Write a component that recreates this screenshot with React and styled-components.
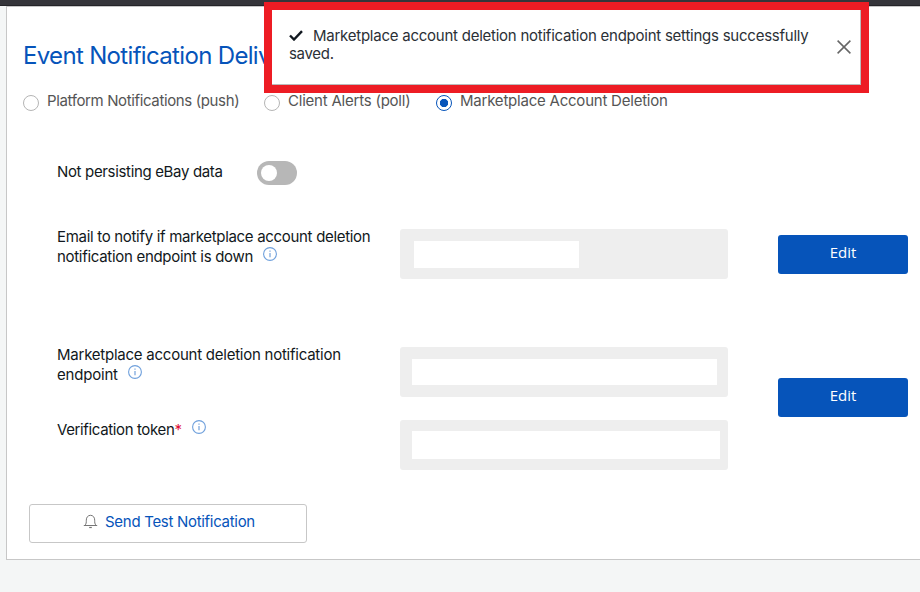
import React from "react";
import styled, { createGlobalStyle } from "styled-components";

const InfoIcon = () => (
  <InfoSvg viewBox="0 0 14 14">
    <circle cx="7" cy="7" r="6.4" fill="none" stroke="#6fa0dc" strokeWidth="1.1" />
    <path d="M7 6v4.3M7 3.6v1.2" stroke="#7fa9de" strokeWidth="1.3" />
  </InfoSvg>
);

const BellIcon = () => (
  <svg width="15" height="15" viewBox="0 0 15 15" fill="none" stroke="#767676">
    <path d="M.8 11.5h13.4M2 11.3C3.3 9.8 3.3 8.5 3.3 6.2 3.3 3.3 5 1.3 7.5 1.3s4.2 2 4.2 4.9c0 2.3 0 3.6 1.3 5.1" />
    <path d="M6.2 13.5h2.6" strokeWidth="1.2" />
  </svg>
);

const App = () => {
  return (
    <>
      <GlobalStyle />
      <Page>
        <TopBar />
        <Panel>
          <Title>Event Notification Delivery</Title>
          <RadioGroup>
            <Radio>
              <Dot />
              <RadioText $track={-0.37}>Platform Notifications (push)</RadioText>
            </Radio>
            <Radio>
              <Dot />
              <RadioText $track={-0.22}>Client Alerts (poll)</RadioText>
            </Radio>
            <Radio>
              <Dot $checked />
              <RadioText $track={-0.22}>Marketplace Account Deletion</RadioText>
            </Radio>
          </RadioGroup>

          <ToggleRow>
            <Text $track={-0.34}>Not persisting eBay data</Text>
            <Toggle>
              <Knob />
            </Toggle>
          </ToggleRow>

          <EmailRow>
            <Label>
              <Text $track={-0.31}>Email to notify if marketplace account deletion</Text>
              <br />
              <Text $track={-0.3}>notification endpoint is down</Text>
              <InfoIcon />
            </Label>
            <Field $pad="12px 14px">
              <Value $width={165} $height={27} />
            </Field>
            <EditButton>Edit</EditButton>
          </EmailRow>

          <EndpointRow>
            <Stack>
              <FieldRow>
                <Label>
                  <Text $track={-0.24}>Marketplace account deletion notification</Text>
                  <br />
                  <Text $track={-0.2}>endpoint</Text>
                  <InfoIcon />
                </Label>
                <Field $pad="12px">
                  <Value $width={305} $height={26} />
                </Field>
              </FieldRow>
              <FieldRow>
                <Label $drop={2}>
                  <Text $track={-0.37}>
                    Verification token<Required>*</Required>
                  </Text>
                  <InfoIcon />
                </Label>
                <Field $pad="11px 12px">
                  <Value $width={308} $height={28} />
                </Field>
              </FieldRow>
            </Stack>
            <EditButton>Edit</EditButton>
          </EndpointRow>

          <TestButton>
            <BellIcon />
            <Text $track={-0.3}>Send Test Notification</Text>
          </TestButton>
        </Panel>

        <Toast>
          <ToastBody>
            <Message>
              <Check viewBox="0 0 14 11">
                <path d="M1 5.5l4 4L13 1.2" fill="none" stroke="#111820" strokeWidth="2.4" />
              </Check>
              <Text $track={-0.245}>
                Marketplace account deletion notification endpoint settings successfully
              </Text>
              <br />
              <Text $track={-0.3}>saved.</Text>
            </Message>
            <Close viewBox="0 0 14 14">
              <path d="M.6.6l12.8 12.8M13.4.6L.6 13.4" stroke="#666" strokeWidth="1.5" />
            </Close>
          </ToastBody>
        </Toast>
      </Page>
    </>
  );
};

const GlobalStyle = createGlobalStyle`
  * {
    box-sizing: border-box;
  }
  body {
    margin: 0;
    background: #f4f6f6;
    font-family: Inter, "Liberation Sans", sans-serif;
    font-size: 15px;
    color: #111820;
    overflow: hidden;
  }
`;

const Page = styled.div`
  position: relative;
  width: 920px;
  height: 592px;
  overflow: hidden;
`;

const TopBar = styled.div`
  height: 6px;
  background: #35353a;
  border-bottom: 1px solid #242428;
`;

const Panel = styled.main`
  height: 554px;
  margin-left: 6px;
  padding: 34px 0 0 16px;
  background: #fff;
  border: 1px solid #c7c7c7;
  border-right: 0;
`;

const Title = styled.h1`
  margin: 0;
  width: 245px;
  height: 30px;
  line-height: 30px;
  overflow: hidden;
  font-size: 24px;
  font-weight: 400;
  letter-spacing: -0.67px;
  color: #0654ba;
  white-space: nowrap;
`;

const Text = styled.span`
  letter-spacing: ${({ $track }) => $track}px;
  white-space: nowrap;
`;

const RadioGroup = styled.div`
  display: flex;
  height: 20px;
  margin-top: 20px;
`;

const Radio = styled.label`
  display: flex;
  gap: 8px;
  flex-shrink: 0;

  &:nth-child(1) {
    width: 241px;
  }
  &:nth-child(2) {
    width: 172px;
  }
`;

const RadioText = styled(Text)`
  line-height: 20px;
  color: #555;
`;

const Dot = styled.span`
  width: 16px;
  height: 16px;
  margin-top: 4px;
  border: 1px solid ${({ $checked }) => ($checked ? "#0654ba" : "#b5b5b5")};
  border-radius: 50%;
  background: ${({ $checked }) =>
    $checked ? "radial-gradient(circle, #0654ba 3.8px, #fff 4.5px)" : "#fff"};
`;

const ToggleRow = styled.div`
  display: grid;
  grid-template-columns: 200px 40px;
  height: 24px;
  margin: 50px 0 0 34px;
  line-height: 22px;
`;

const Toggle = styled.div`
  width: 40px;
  height: 24px;
  padding: 4px;
  border-radius: 12px;
  background: #b7b7b7;
`;

const Knob = styled.div`
  width: 16px;
  height: 16px;
  border-radius: 50%;
  background: #fff;
`;

const FieldRow = styled.div`
  display: grid;
  grid-template-columns: 343px 328px;
  height: 50px;
`;

const EmailRow = styled(FieldRow)`
  grid-template-columns: 343px 328px 180px;
  margin: 44px 0 0 34px;

  button {
    margin: 6px 0 0 50px;
  }
`;

const EndpointRow = styled.div`
  display: flex;
  align-items: center;
  gap: 50px;
  margin: 68px 0 0 34px;

  button {
    margin-top: -22px;
  }
`;

const Stack = styled.div`
  display: grid;
  gap: 23px;
`;

const Label = styled.div`
  margin-top: ${({ $drop = 0 }) => $drop - 2}px;
  line-height: 20px;
`;

const InfoSvg = styled.svg`
  width: 14px;
  height: 14px;
  margin-left: 10px;
  vertical-align: 1px;
`;

const Required = styled.span`
  color: #e0103a;
`;

const Field = styled.div`
  height: 50px;
  padding: ${({ $pad }) => $pad};
  border-radius: 3px;
  background: #eee;
`;

const Value = styled.div`
  width: ${({ $width }) => $width}px;
  height: ${({ $height }) => $height}px;
  background: #fff;
`;

const EditButton = styled.button`
  width: 130px;
  height: 39px;
  padding: 0 0 5px;
  border: 0;
  border-radius: 3px;
  background: #0654ba;
  color: #fff;
  font: 15px "Open Sans", sans-serif;
`;

const TestButton = styled.button`
  display: flex;
  align-items: center;
  justify-content: center;
  gap: 7px;
  width: 278px;
  height: 39px;
  margin: 34px 0 0 6px;
  padding: 0 0 5px 2px;
  border: 1px solid #c7c7c7;
  border-radius: 3px;
  background: #fff;
  color: #0654ba;
  font: inherit;
`;

const Toast = styled.div`
  position: absolute;
  top: 2px;
  left: 264px;
  width: 605px;
  height: 91px;
  border: 8px solid #ed1c24;
`;

const ToastBody = styled.div`
  display: flex;
  justify-content: space-between;
  height: 75px;
  padding: 17px 9px 0 17px;
  background: #fff;
  border-right: 1px solid #bbb;
  border-bottom: 1px solid #bbb;
`;

const Message = styled.div`
  line-height: 18px;
  color: #2b3036;
  white-space: nowrap;
`;

const Check = styled.svg`
  width: 14px;
  height: 11px;
  margin-right: 10px;
`;

const Close = styled.svg`
  width: 14px;
  height: 14px;
  margin-top: 13px;
`;

export default App;
